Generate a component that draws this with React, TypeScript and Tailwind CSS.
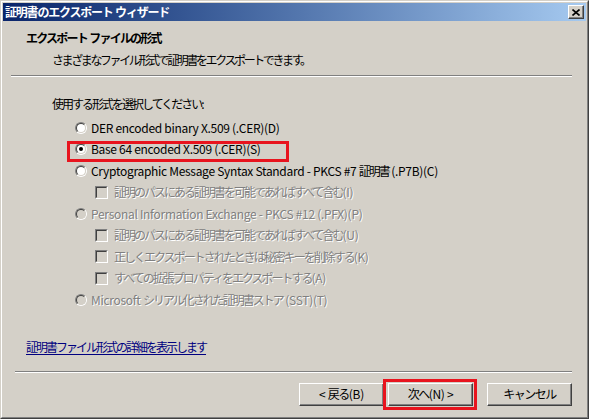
import React from 'react';

const FONT = "font-['Noto_Sans_CJK_JP','MS_UI_Gothic',sans-serif]";

// MS UI Gothic is a lot narrower than Noto for kana, so squeeze the CJK runs
const jp = (text: string, cjk = 'tracking-[-2px]', latin = 'tracking-[-0.3px]') =>
    text.split(/([\u3000-\u9fff\uff00-\uffef]+)/).filter(Boolean).map((part, i) =>
        /[\u3000-\u9fff\uff00-\uffef]/.test(part)
            ? <span key={i} className={cjk}>{part}</span>
            : <span key={i} className={latin}>{part}</span>
    );

type RadioProps = { label: string; checked?: boolean; disabled?: boolean };

const Radio = ({ label, checked, disabled }: RadioProps) => (
    <div className="flex items-center h-[21.5px] gap-[4px]">
        <span className="w-[12px] h-[12px] rounded-full border border-t-[#808080] border-l-[#808080] border-r-white border-b-white flex">
            <span className={`flex-1 rounded-full border border-t-[#404040] border-l-[#404040] border-r-[#d4d0c8] border-b-[#d4d0c8] flex items-center justify-center ${disabled ? 'bg-[#d4d0c8]' : 'bg-white'}`}>
                {checked && <span className="w-[4px] h-[4px] rounded-full bg-black" />}
            </span>
        </span>
        <span className={`whitespace-pre ${disabled ? 'text-[#808080] [text-shadow:1px_1px_0_#fff]' : 'text-black'}`}>{jp(label)}</span>
    </div>
);

const Check = ({ label }: { label: string }) => (
    <div className="flex items-center h-[21.5px] gap-[6px] pl-[20px]">
        <span className="w-[13px] h-[13px] border border-t-[#808080] border-l-[#808080] border-r-white border-b-white flex">
            <span className="flex-1 border border-t-[#404040] border-l-[#404040] border-r-[#d4d0c8] border-b-[#d4d0c8] bg-[#d4d0c8]" />
        </span>
        <span className="whitespace-pre text-[#808080] [text-shadow:1px_1px_0_#fff]">{jp(label)}</span>
    </div>
);

const Button = ({ label }: { label: string }) => (
    <button className="w-[85px] h-[23px] bg-[#d4d0c8] border border-t-white border-l-white border-r-[#404040] border-b-[#404040] shadow-[inset_-1px_-1px_#808080] text-black leading-none whitespace-pre">
        {jp(label, 'tracking-[-1.5px]')}
    </button>
);

const Etched = ({ className }: { className: string }) => (
    <div className={`h-[2px] border-t border-t-[#808080] border-b border-b-white ${className}`} />
);

export default function App() {
    return (
        <div className={`w-[589px] h-[419px] bg-[#d4d0c8] text-[12px] leading-none ${FONT} border border-t-[#d4d0c8] border-l-[#d4d0c8] border-r-[#404040] border-b-[#404040]`}>
            <div className="h-full border border-t-white border-l-white border-r-[#808080] border-b-[#808080] p-px flex flex-col">
                {/* title bar */}
                <div className="h-[18px] flex items-center justify-between pl-[2px] pr-[2px] bg-gradient-to-r from-[#0a246a] to-[#a6caf0]">
                    <span className="text-white font-bold text-[12px] whitespace-pre">{jp('証明書のエクスポート ウィザード', 'tracking-[-1.2px]')}</span>
                    <span className="w-[16px] h-[14px] bg-[#d4d0c8] border border-t-white border-l-white border-r-[#404040] border-b-[#404040] shadow-[inset_-1px_-1px_#808080] flex items-center justify-center">
                        <svg width="8" height="7" viewBox="0 0 8 7">
                            <path d="M0.5 0.5 L7.5 6.5 M7.5 0.5 L0.5 6.5" stroke="#000" strokeWidth="1.6" />
                        </svg>
                    </span>
                </div>

                {/* header */}
                <div className="h-[54px] flex flex-col pl-[23px] pt-[11px]">
                    <span className="font-bold whitespace-pre">{jp('エクスポート ファイルの形式', 'tracking-[-1.8px]')}</span>
                    <span className="pl-[26px] mt-[10px]">{jp('さまざまなファイル形式で証明書をエクスポートできます。', 'tracking-[-2.4px]')}</span>
                </div>
                <Etched className="mx-[8px] mr-[14px]" />

                {/* body */}
                <div className="flex flex-col pl-[49px] pt-[21px]">
                    <span>{jp('使用する形式を選択してください:')}</span>
                    <div className="flex flex-col pl-[23px] mt-[7px]">
                        <Radio label="DER encoded binary X.509 (.CER)(D)" />
                        <div className="relative">
                            <Radio label="Base 64 encoded X.509 (.CER)(S)" checked />
                            <div className="absolute left-[-8px] top-[2px] w-[222px] h-[21px] border-[3px] border-[#e8141e]" />
                        </div>
                        <Radio label="Cryptographic Message Syntax Standard - PKCS #7 証明書 (.P7B)(C)" />
                        <Check label="証明のパスにある証明書を可能であればすべて含む(I)" />
                        <Radio label="Personal Information Exchange - PKCS #12 (.PFX)(P)" disabled />
                        <Check label="証明のパスにある証明書を可能であればすべて含む(U)" />
                        <Check label="正しくエクスポートされたときは秘密キーを削除する(K)" />
                        <Check label="すべての拡張プロパティをエクスポートする(A)" />
                        <Radio label="Microsoft シリアル化された証明書ストア (SST)(T)" disabled />
                    </div>
                </div>

                <div className="pl-[23px] mt-[30px]">
                    <span className="text-[#000080] underline underline-offset-2">{jp('証明書ファイル形式の詳細を表示します')}</span>
                </div>

                <Etched className="ml-[12px] mr-[14px] mt-[18px]" />

                <div className="flex justify-end gap-[4px] pr-[14px] mt-[10px]">
                    <Button label="< 戻る(B)" />
                    <div className="relative flex">
                        <Button label="次へ(N) >" />
                        <div className="absolute -left-[5px] -top-[4px] -right-[4px] -bottom-[4px] border-[3px] border-[#e8141e]" />
                    </div>
                    <div className="ml-[10px] flex">
                        <Button label="キャンセル" />
                    </div>
                </div>
            </div>
        </div>
    );
}
